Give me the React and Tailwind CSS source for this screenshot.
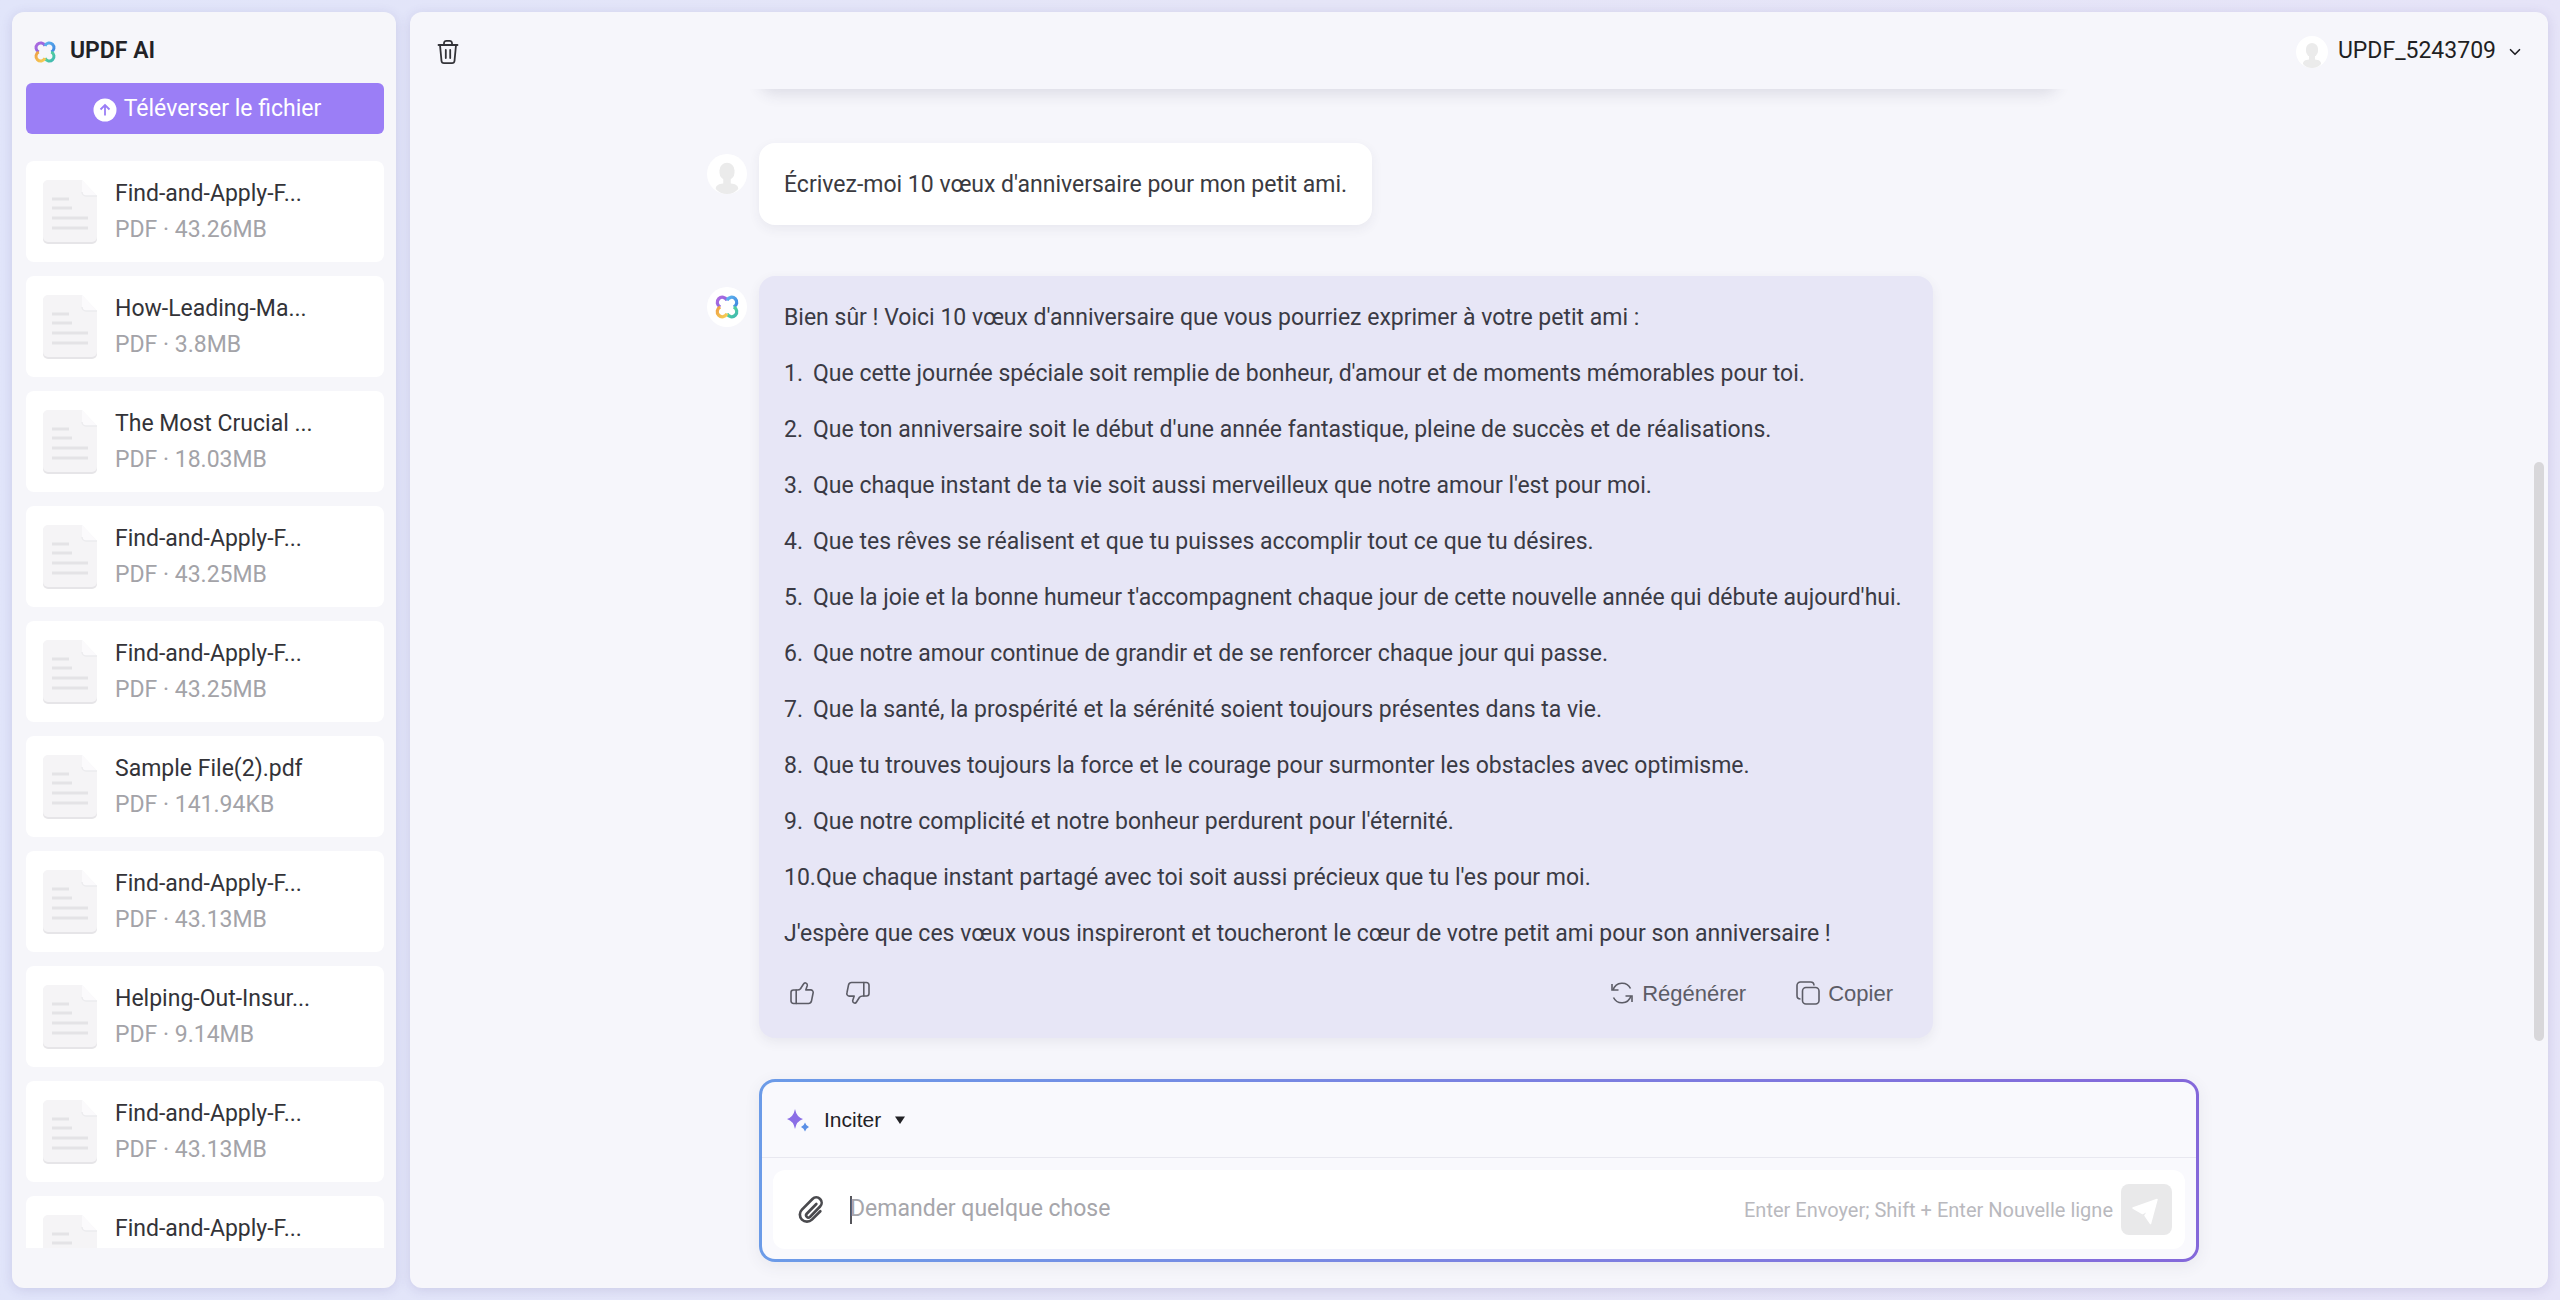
import { useId, useState } from "react";
import { ChevronDown } from "lucide-react";

const files = [
  { name: "Find-and-Apply-F...", size: "43.26MB" },
  { name: "How-Leading-Ma...", size: "3.8MB" },
  { name: "The Most Crucial ...", size: "18.03MB" },
  { name: "Find-and-Apply-F...", size: "43.25MB" },
  { name: "Find-and-Apply-F...", size: "43.25MB" },
  { name: "Sample File(2).pdf", size: "141.94KB" },
  { name: "Find-and-Apply-F...", size: "43.13MB" },
  { name: "Helping-Out-Insur...", size: "9.14MB" },
  { name: "Find-and-Apply-F...", size: "43.13MB" },
  { name: "Find-and-Apply-F..." },
];

const wishes = [
  "Que cette journée spéciale soit remplie de bonheur, d'amour et de moments mémorables pour toi.",
  "Que ton anniversaire soit le début d'une année fantastique, pleine de succès et de réalisations.",
  "Que chaque instant de ta vie soit aussi merveilleux que notre amour l'est pour moi.",
  "Que tes rêves se réalisent et que tu puisses accomplir tout ce que tu désires.",
  "Que la joie et la bonne humeur t'accompagnent chaque jour de cette nouvelle année qui débute aujourd'hui.",
  "Que notre amour continue de grandir et de se renforcer chaque jour qui passe.",
  "Que la santé, la prospérité et la sérénité soient toujours présentes dans ta vie.",
  "Que tu trouves toujours la force et le courage pour surmonter les obstacles avec optimisme.",
  "Que notre complicité et notre bonheur perdurent pour l'éternité.",
  "Que chaque instant partagé avec toi soit aussi précieux que tu l'es pour moi.",
];

// four lobes, each fading into its own darker tone
const lobes = [
  { d: "M5.800 12A4.700 4.700 0 1 1 12 5.800", from: "#7d63dc", to: "#b06be0" },
  { d: "M12 5.800A4.700 4.700 0 1 1 18.200 12", from: "#3f86e0", to: "#5fb4ee" },
  { d: "M18.200 12A4.700 4.700 0 1 1 12 18.200", from: "#3fb8b4", to: "#5fdc8c" },
  { d: "M12 18.200A4.700 4.700 0 1 1 5.800 12", from: "#f6cf55", to: "#eea045" },
];

function Logo({ className }) {
  const id = useId();

  return (
    <svg viewBox="0 0 24 24" fill="none" strokeWidth="3" className={className}>
      {lobes.map((lobe, i) => (
        <g key={lobe.d}>
          <linearGradient id={`${id}${i}`} x1="0" y1="0" x2="1" y2="1">
            <stop stopColor={lobe.to} />
            <stop offset="1" stopColor={lobe.from} />
          </linearGradient>
          <path d={lobe.d} stroke={`url(#${id}${i})`} />
        </g>
      ))}
    </svg>
  );
}

function Avatar({ className }) {
  return (
    <svg viewBox="0 0 32 32" className={className}>
      <circle cx="16" cy="16" r="16" fill="#fff" />
      <rect x="10" y="7" width="12" height="14" rx="6" fill="#ebebeb" />
      <path d="M13 19h6v4.500c4 .5 6 1.500 6 4.500-2 2.500-5.500 4-9 4s-7-1.500-9-4c0-3 2-4 6-4.500z" fill="#ebebeb" />
    </svg>
  );
}

function DocIcon() {
  return (
    <svg viewBox="0 0 54 64" className="mt-1 h-16 w-[54px] shrink-0">
      <path d="M5 1H39L54 17V59a5 5 0 0 1-5 5H5a5 5 0 0 1-5-5V6a5 5 0 0 1 5-5z" fill="#e6e5e8" />
      <path d="M5 0H39L54 16V57a5 5 0 0 1-5 5H5a5 5 0 0 1-5-5V5a5 5 0 0 1 5-5z" fill="#f5f4f6" />
      <path d="M39 0L54 16H43a4 4 0 0 1-4-4z" fill="#fbfafc" />
      <path d="M39 12a4 4 0 0 0 4 4H54" fill="none" stroke="#ececee" strokeWidth="1.500" />
      <g stroke="#e4e3e6" strokeWidth="3">
        <path d="M9 19H26M9 28H29M9 38H45M9 48H45" />
      </g>
    </svg>
  );
}

function ThumbIcon({ className }) {
  return (
    <svg viewBox="0 0 24 24" fill="none" stroke="currentColor" strokeWidth="1.600" strokeLinejoin="round" strokeLinecap="round" className={className}>
      <path d="M7 9H3.500A2.500 2.500 0 0 0 1 11.500V20a2.500 2.500 0 0 0 2.500 2.500H18.500a3 3 0 0 0 2.900-2.200L23.100 12A2.500 2.500 0 0 0 20.700 8.900H15.800L17.200 4.800C17.800 2.200 14.800 .8 13.500 3L10.500 7.700Q9.500 9 7 9z" />
      <path d="M6.200 9V22.500" />
    </svg>
  );
}

function RefreshIcon() {
  return (
    <svg viewBox="0 0 24 24" fill="none" stroke="currentColor" strokeWidth="1.600" className="size-6">
      <path d="M3 9C6 .2 17 .2 20.500 7.500" />
      <path d="M2 3V9H8.500" />
      <path d="M21 15C18 23.800 7 23.800 3.500 16.500" />
      <path d="M22 21V15H15.500" />
    </svg>
  );
}

function CopyIcon() {
  return (
    <svg viewBox="0 0 24 24" fill="none" stroke="currentColor" strokeWidth="1.600" className="size-6">
      <rect x="6.500" y="6.500" width="16.500" height="16.500" rx="3.500" />
      <path d="M4.500 18C2 18 1 17 1 14.500V4.500A3.500 3.500 0 0 1 4.500 1H14.500C17 1 18 2 18 4.500" />
    </svg>
  );
}

function TrashIcon() {
  return (
    <svg viewBox="0 0 24 26" fill="none" stroke="currentColor" strokeWidth="1.800" strokeLinejoin="round" strokeLinecap="round" className="h-[26px] w-6">
      <path d="M2.500 6H21.500" />
      <path d="M8 6V4A2.500 2.500 0 0 1 10.500 1.800H13.500A2.500 2.500 0 0 1 16 4V6" />
      <path d="M4 6L5.500 22A2.500 2.500 0 0 0 8 24.200H16A2.500 2.500 0 0 0 18.500 22L20 6" />
      <path d="M9.800 11V19M14.200 11V19" />
    </svg>
  );
}

function FileCard({ name, size }) {
  return (
    <li className="flex h-[101px] shrink-0 items-start gap-[18px] rounded-lg bg-white px-[17px] py-[15px]">
      <DocIcon />
      <div className="min-w-0 leading-9">
        <p className="truncate text-[#333338]">{name}</p>
        {size && <p className="text-[#a3a3a8]">PDF · {size}</p>}
      </div>
    </li>
  );
}

function Sidebar() {
  return (
    <aside className="flex w-[384px] shrink-0 flex-col rounded-xl bg-[#f6f6fa] pr-3 pb-10 pl-[14px] shadow-[0_2px_12px_rgba(80,70,140,0.16)]">
      <div className="flex h-[71px] shrink-0 items-center gap-[13px] pt-2 pl-[7px]">
        <Logo className="size-6" />
        <h1 className="font-semibold text-[#222226]">UPDF AI</h1>
      </div>
      <button
        type="button"
        className="flex h-[51px] shrink-0 items-center justify-center gap-[7px] rounded-md bg-[#9b7ef6] pt-0.5 pl-1 text-white"
      >
        <svg viewBox="0 0 24 24" fill="none" className="size-6">
          <circle cx="12" cy="12" r="11.500" fill="#fff" />
          <path d="M12 17.500V7.500M7.500 11.500L12 7L16.500 11.500" stroke="#9b7ef6" strokeWidth="1.800" />
        </svg>
        Téléverser le fichier
      </button>
      <ul className="mt-[27px] flex min-h-0 flex-1 flex-col gap-[14px] overflow-hidden">
        {files.map((file, i) => (
          <FileCard key={i} {...file} />
        ))}
      </ul>
    </aside>
  );
}

function Header() {
  return (
    <header className="flex h-[77px] shrink-0 items-center justify-between pt-0.5 pr-6 pl-[26px]">
      <button type="button" aria-label="Supprimer" className="text-[#333338]">
        <TrashIcon />
      </button>
      <button type="button" className="flex items-center gap-[10px] text-[#1f1f23]">
        <Avatar className="size-8" />
        UPDF_5243709
        <ChevronDown className="size-[18px]" strokeWidth={2.2} />
      </button>
    </header>
  );
}

function Answer() {
  return (
    <div className="flex items-start gap-3">
      <div className="mt-[11px] flex size-10 shrink-0 items-center justify-center rounded-full bg-white">
        <Logo className="size-[26px]" />
      </div>
      <div className="w-[1174px] max-w-full rounded-2xl bg-[#e7e6f6] px-[25px] pt-7 pb-[31px] text-[#3a3a44] shadow-[0_4px_12px_rgba(60,60,90,0.08)]">
        <div className="flex flex-col gap-7 leading-7">
          <p>Bien sûr ! Voici 10 vœux d'anniversaire que vous pourriez exprimer à votre petit ami :</p>
          <ol className="flex flex-col gap-7">
            {wishes.map((wish, i) => (
              <li key={wish} className="flex">
                <span className="min-w-[29px]">{i + 1}.</span>
                <span>{wish}</span>
              </li>
            ))}
          </ol>
          <p>J'espère que ces vœux vous inspireront et toucheront le cœur de votre petit ami pour son anniversaire !</p>
        </div>
        <div className="mt-[31px] flex h-7 items-center justify-between px-1.5 font-['Liberation_Sans',sans-serif] text-[22px] text-[#5c5c66]">
          <div className="flex gap-8">
            <button type="button" aria-label="J'aime">
              <ThumbIcon className="size-6" />
            </button>
            <button type="button" aria-label="Je n'aime pas">
              <ThumbIcon className="size-6 rotate-180" />
            </button>
          </div>
          <div className="flex gap-[50px] pr-[9px]">
            <button type="button" className="flex items-center gap-2">
              <RefreshIcon />
              Régénérer
            </button>
            <button type="button" className="flex items-center gap-2">
              <CopyIcon />
              Copier
            </button>
          </div>
        </div>
      </div>
    </div>
  );
}

function Composer() {
  const [message, setMessage] = useState("");

  return (
    <div className="rounded-2xl bg-linear-to-r from-[#6b9be8] to-[#8468da] p-[3px] shadow-[0_4px_16px_rgba(60,60,90,0.08)]">
      <div className="rounded-[13px] bg-[#f9f9fd]">
        <div className="flex h-[76px] items-center border-b border-[#e8e8f0] pl-6">
          <button
            type="button"
            className="flex items-center gap-[14px] font-['Liberation_Sans',sans-serif] text-[21px] text-[#222226]"
          >
            <svg viewBox="0 0 24 24" className="size-6">
              <path d="M9 1Q10.500 9 17 11Q10.500 13 9 21Q7.500 13 1 11Q7.500 9 9 1z" fill="#8b6ee6" />
              <path d="M19 14.500Q20 18 23 19Q20 20 19 23.500Q18 20 15 19Q18 18 19 14.500z" fill="#5a8fe6" />
            </svg>
            Inciter
            <svg viewBox="0 0 10 8" className="h-2 w-2.5">
              <path d="M0 .5H10L5 8z" fill="currentColor" />
            </svg>
          </button>
        </div>
        <div className="px-[11px] pt-3 pb-[10px]">
          <div className="flex h-[79px] items-center rounded-xl bg-white pr-[13px] pl-[22px]">
            <button type="button" aria-label="Joindre un fichier" className="text-[#4a4a4e]">
              <svg viewBox="0 0 24 24" fill="none" stroke="currentColor" strokeWidth="2" strokeLinecap="round" className="size-8">
                <path d="m16 7.500-7.200 7.300a1.700 1.700 0 0 0 2.400 2.400l7.600-7.800a4 4 0 1 0-5.700-5.700l-7.900 8a5.300 5.300 0 1 0 7.500 7.500l6.300-6.300" />
              </svg>
            </button>
            <span className="ml-[23px] h-7 w-0.5 bg-[#55555a]" />
            <input
              type="text"
              aria-label="Message"
              placeholder="Demander quelque chose"
              value={message}
              onChange={(e) => setMessage(e.target.value)}
              className="-ml-0.5 min-w-0 flex-1 caret-transparent outline-none placeholder:text-[#a6a6ab]"
            />
            <span className="text-[20px] text-[#b9b9be]">Enter Envoyer; Shift + Enter Nouvelle ligne</span>
            <button type="button" aria-label="Envoyer" className="ml-2 rounded-lg bg-[#e9e9ea]">
              <svg viewBox="0 0 51 51" className="size-[51px]">
                <path d="M12 24L36 15.500L29.500 39.500L24 31.500L28 26L21.500 29.500z" fill="#fff" stroke="#fff" strokeWidth="1.500" strokeLinejoin="round" />
              </svg>
            </button>
          </div>
        </div>
      </div>
    </div>
  );
}

function Chat() {
  return (
    <main className="relative flex min-w-0 flex-1 flex-col rounded-xl bg-[#f6f6fb] shadow-[0_2px_12px_rgba(80,70,140,0.16)]">
      <Header />
      <div className="flex min-h-0 flex-1 flex-col overflow-hidden">
        <div className="mx-auto w-full max-w-[1544px]">
          {/* end of the previous answer, scrolled out of view */}
          <div className="-mt-10 ml-[52px] h-10 max-w-[1300px] rounded-2xl bg-[#e7e6f6] shadow-[0_6px_14px_rgba(60,60,90,0.12)]" />
          <div className="mt-[54px] flex items-start gap-3">
            <Avatar className="mt-[11px] size-10 shrink-0" />
            <p className="rounded-2xl bg-white px-[25px] pt-7 pb-[26px] leading-7 text-[#3a3a40] shadow-[0_4px_12px_rgba(60,60,90,0.07)]">
              Écrivez-moi 10 vœux d'anniversaire pour mon petit ami.
            </p>
          </div>
          <div className="mt-[51px]">
            <Answer />
          </div>
        </div>
      </div>
      <div className="mx-auto w-full max-w-[1544px] px-[52px] pb-[26px]">
        <Composer />
      </div>
      <div className="absolute top-[450px] right-1 h-[579px] w-[10px] rounded-full bg-[#d8d7da]" />
    </main>
  );
}

export default function App() {
  return (
    <div className="flex h-screen gap-[14px] bg-linear-to-r from-[#e1e5fa] via-[#e5e5f7] to-[#e6e4f8] p-3 font-['Roboto','Liberation_Sans',sans-serif] text-[23px]">
      <Sidebar />
      <Chat />
    </div>
  );
}
